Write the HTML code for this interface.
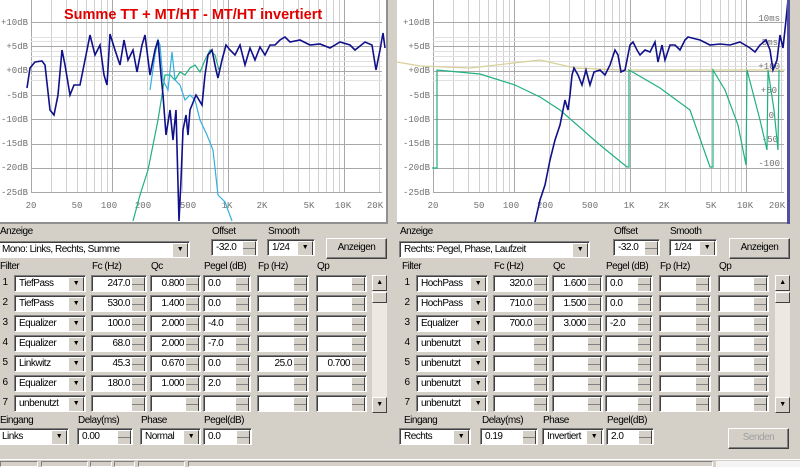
<!DOCTYPE html>
<html><head><meta charset="utf-8">
<style>
*{box-sizing:border-box;margin:0;padding:0}
body{width:800px;height:467px;overflow:hidden;background:#d4d0c8;font-family:"Liberation Sans",sans-serif;font-size:10px;letter-spacing:-0.5px;color:#000;position:relative}
.p{position:absolute;top:0;width:400px;height:467px}
.a{position:absolute;white-space:nowrap}
.lb{position:absolute;white-space:nowrap;font-size:10px}
.f{position:absolute;height:17px;background:#fff;border:1px solid;border-color:#808080 #fff #fff #808080;box-shadow:inset 1px 1px #404040;line-height:15px;padding:0 4px;white-space:nowrap;overflow:hidden}
.s{padding-right:16px;text-align:right}
.s.l{text-align:left}
.s::after{content:"";position:absolute;right:1px;top:1px;width:12px;height:13px;background:linear-gradient(#d4d0c8 0 6px,#808080 6px 7px,#d4d0c8 7px);border:1px solid;border-color:#fff #404040 #404040 #fff}
.d{padding-right:18px}
.d::after{content:"\25BC";font-size:7px;text-align:center;line-height:12px;position:absolute;right:1px;top:1px;width:14px;height:13px;background:#d4d0c8;border:1px solid;border-color:#fff #404040 #404040 #fff}
.btn{position:absolute;background:#d4d0c8;border:1px solid;border-color:#fff #404040 #404040 #fff;box-shadow:inset -1px -1px #808080;text-align:center;line-height:18px}
.sb{position:absolute;background:#ece9e2;width:15px}
.sb i{position:absolute;left:0;width:15px;height:16px;background:#d4d0c8;border:1px solid;border-color:#fff #404040 #404040 #fff;font-style:normal;font-size:7px;text-align:center;line-height:14px}
.n{position:absolute;width:10px;text-align:center}
svg text{font-family:"Liberation Mono",monospace;font-size:9px;fill:#707070;letter-spacing:0}
</style></head><body>

<div class="p" style="left:0">
<svg class="plot" style="position:absolute;left:-5px;top:0" width="393" height="224" viewBox="-5 0 393 224">
<rect x="-5" y="0" width="391" height="222" fill="#fff"/>
<rect x="-5" y="222" width="393" height="2" fill="#909090"/>
<rect x="386" y="0" width="2" height="224" fill="#909090"/>
<g class="grid"></g>
<text x="28" y="25" text-anchor="end">+10dB</text>
<text x="28" y="49" text-anchor="end">+5dB</text>
<text x="28" y="73" text-anchor="end">+0dB</text>
<text x="28" y="98" text-anchor="end">-5dB</text>
<text x="28" y="122" text-anchor="end">-10dB</text>
<text x="28" y="146" text-anchor="end">-15dB</text>
<text x="28" y="170" text-anchor="end">-20dB</text>
<text x="28" y="195" text-anchor="end">-25dB</text>
<g text-anchor="middle"><text x="31" y="208">20</text><text x="77" y="208">50</text><text x="109" y="208">100</text><text x="143" y="208">200</text><text x="188" y="208">500</text><text x="227" y="208">1K</text><text x="262" y="208">2K</text><text x="309" y="208">5K</text><text x="343" y="208">10K</text><text x="375" y="208">20K</text></g>
<polyline fill="none" stroke="#20b080" stroke-width="1.2" points="133,221 140,195 148,170 153,145 158,120 162,95 165,75 170,75 175,80 180,72 185,75 190,68 195,65 200,72 205,60 210,50 215,55 219,70"/>
<polyline fill="none" stroke="#30b0e0" stroke-width="1.2" points="150,90 155,55 158,40 160,45 163,80 168,90 172,52 175,80 180,85 185,100 190,95 195,100 200,120 207,135 213,150 218,195 225,202 232,221"/>
<polyline fill="none" stroke="#10108a" stroke-width="1.6" points="27,88 30,68 35,62 42,61 45,65 50,110 54,115 58,95 62,50 65,65 70,95 74,85 80,85 85,60 90,35 95,55 100,45 104,75 107,85 110,34 115,50 120,65 124,40 128,60 133,50 137,72 142,45 145,35 150,75 155,50 158,40 161,75 163,95 166,135 170,110 173,140 176,110 179,221 181,180 183,130 186,115 188,135 190,110 196,95 199,100 202,105 205,75 208,55 212,50 216,70 218,78 222,60 226,45 230,50 235,55 240,45 245,65 250,48 255,60 260,47 265,55 270,45 275,45 280,40 285,37 290,42 300,40 310,45 320,44 330,48 340,42 350,45 355,50 365,42 372,45 376,70 380,50 383,33 385,48"/>
<text x="64" y="19" style="font-family:'Liberation Sans',sans-serif;font-size:14.5px;font-weight:bold;fill:#e00000">Summe TT + MT/HT - MT/HT invertiert</text>
</svg>

<div class="lb" style="left:0;top:226px">Anzeige</div>
<div class="f d" style="left:-3px;top:241px;width:193px">Mono: Links, Rechts, Summe</div>
<div class="lb" style="left:212px;top:226px">Offset</div>
<div class="f s l" style="left:211px;top:239px;width:47px">-32.0</div>
<div class="lb" style="left:268px;top:226px">Smooth</div>
<div class="f d" style="left:267px;top:239px;width:48px">1/24</div>
<div class="btn" style="left:326px;top:238px;width:61px;height:21px">Anzeigen</div>

<div class="lb" style="left:0;top:261px">Filter</div>
<div class="lb" style="left:92px;top:261px">Fc (Hz)</div>
<div class="lb" style="left:151px;top:261px">Qc</div>
<div class="lb" style="left:204px;top:261px">Pegel (dB)</div>
<div class="lb" style="left:258px;top:261px">Fp (Hz)</div>
<div class="lb" style="left:317px;top:261px">Qp</div>

<div class="a" style="left:0;top:275px;width:390px;height:140px">
<div class="n" style="top:2px">1</div><div class="f d" style="left:14px;top:0;width:72px">TiefPass</div><div class="f s" style="left:91px;top:0;width:56px">247.0</div><div class="f s" style="left:150px;top:0;width:51px">0.800</div><div class="f s l" style="left:203px;top:0;width:48px">0.0</div><div class="f s" style="left:257px;top:0;width:52px"></div><div class="f s" style="left:316px;top:0;width:51px"></div>
<div class="n" style="top:22px">2</div><div class="f d" style="left:14px;top:20px;width:72px">TiefPass</div><div class="f s" style="left:91px;top:20px;width:56px">530.0</div><div class="f s" style="left:150px;top:20px;width:51px">1.400</div><div class="f s l" style="left:203px;top:20px;width:48px">0.0</div><div class="f s" style="left:257px;top:20px;width:52px"></div><div class="f s" style="left:316px;top:20px;width:51px"></div>
<div class="n" style="top:42px">3</div><div class="f d" style="left:14px;top:40px;width:72px">Equalizer</div><div class="f s" style="left:91px;top:40px;width:56px">100.0</div><div class="f s" style="left:150px;top:40px;width:51px">2.000</div><div class="f s l" style="left:203px;top:40px;width:48px">-4.0</div><div class="f s" style="left:257px;top:40px;width:52px"></div><div class="f s" style="left:316px;top:40px;width:51px"></div>
<div class="n" style="top:62px">4</div><div class="f d" style="left:14px;top:60px;width:72px">Equalizer</div><div class="f s" style="left:91px;top:60px;width:56px">68.0</div><div class="f s" style="left:150px;top:60px;width:51px">2.000</div><div class="f s l" style="left:203px;top:60px;width:48px">-7.0</div><div class="f s" style="left:257px;top:60px;width:52px"></div><div class="f s" style="left:316px;top:60px;width:51px"></div>
<div class="n" style="top:82px">5</div><div class="f d" style="left:14px;top:80px;width:72px">Linkwitz</div><div class="f s" style="left:91px;top:80px;width:56px">45.3</div><div class="f s" style="left:150px;top:80px;width:51px">0.670</div><div class="f s l" style="left:203px;top:80px;width:48px">0.0</div><div class="f s" style="left:257px;top:80px;width:52px">25.0</div><div class="f s" style="left:316px;top:80px;width:51px">0.700</div>
<div class="n" style="top:102px">6</div><div class="f d" style="left:14px;top:100px;width:72px">Equalizer</div><div class="f s" style="left:91px;top:100px;width:56px">180.0</div><div class="f s" style="left:150px;top:100px;width:51px">1.000</div><div class="f s l" style="left:203px;top:100px;width:48px">2.0</div><div class="f s" style="left:257px;top:100px;width:52px"></div><div class="f s" style="left:316px;top:100px;width:51px"></div>
<div class="n" style="top:122px">7</div><div class="f d" style="left:14px;top:120px;width:72px">unbenutzt</div><div class="f s" style="left:91px;top:120px;width:56px"></div><div class="f s" style="left:150px;top:120px;width:51px"></div><div class="f s l" style="left:203px;top:120px;width:48px"></div><div class="f s" style="left:257px;top:120px;width:52px"></div><div class="f s" style="left:316px;top:120px;width:51px"></div>
<div class="sb" style="left:372px;top:0;height:138px"><i style="top:0">&#9650;</i><i style="top:17px;height:11px"></i><i style="bottom:0">&#9660;</i></div>
</div>

<div class="lb" style="left:0;top:415px">Eingang</div>
<div class="f d" style="left:-3px;top:428px;width:72px">Links</div>
<div class="lb" style="left:78px;top:415px">Delay(ms)</div>
<div class="f s l" style="left:77px;top:428px;width:56px">0.00</div>
<div class="lb" style="left:141px;top:415px">Phase</div>
<div class="f d" style="left:140px;top:428px;width:61px">Normal</div>
<div class="lb" style="left:204px;top:415px">Pegel(dB)</div>
<div class="f s l" style="left:203px;top:428px;width:49px">0.0</div>
</div>

<div class="p" style="left:402px">
<svg class="plot" style="position:absolute;left:-5px;top:0" width="393" height="224" viewBox="-5 0 393 224">
<rect x="-5" y="0" width="391" height="222" fill="#fff"/>
<rect x="-5" y="222" width="393" height="2" fill="#909090"/>
<g class="grid"></g>
<text x="28" y="25" text-anchor="end">+10dB</text>
<text x="28" y="49" text-anchor="end">+5dB</text>
<text x="28" y="73" text-anchor="end">+0dB</text>
<text x="28" y="98" text-anchor="end">-5dB</text>
<text x="28" y="122" text-anchor="end">-10dB</text>
<text x="28" y="146" text-anchor="end">-15dB</text>
<text x="28" y="170" text-anchor="end">-20dB</text>
<text x="28" y="195" text-anchor="end">-25dB</text>
<g text-anchor="middle"><text x="31" y="208">20</text><text x="77" y="208">50</text><text x="109" y="208">100</text><text x="143" y="208">200</text><text x="188" y="208">500</text><text x="227" y="208">1K</text><text x="262" y="208">2K</text><text x="309" y="208">5K</text><text x="343" y="208">10K</text><text x="375" y="208">20K</text></g>
<g text-anchor="end"><text x="378" y="21">10ms</text><text x="376" y="45">5ms</text><text x="378" y="69">+100</text><text x="375" y="93">+50</text><text x="372" y="118">0</text><text x="376" y="142">-50</text><text x="378" y="166">-100</text></g>
<g transform="translate(-402,0)">
<polyline fill="none" stroke="#d8d098" stroke-width="1.2" points="397,62 420,66 470,68 540,60 575,68 620,70 785,70"/>
<polyline fill="none" stroke="#20b080" stroke-width="1.2" points="432,168 437,168 437,70 480,74 515,85 540,97 560,110 600,145 627,167 629,167 629,70 660,88 690,110 710,167 713,167 713,70 725,90 738,125 746,165 747,70 760,120 767,150 768,70 774,110 778,150 779,70"/>
<polyline fill="none" stroke="#10108a" stroke-width="1.6" points="535,222 540,200 545,185 550,160 555,140 560,125 565,100 568,110 570,95 572,75 574,68 578,75 582,85 586,70 590,85 594,72 600,70 605,75 610,65 615,50 618,55 621,72 625,70 630,45 633,42 637,50 640,55 645,50 650,52 655,42 658,62 662,45 665,60 670,45 675,45 680,50 685,40 688,37 692,38 700,40 710,45 720,44 730,45 740,42 750,48 755,52 760,45 766,40 770,50 773,70 777,60 780,35 783,48 786,20 788,0"/>
</g>
<rect x="385" y="0" width="3" height="224" fill="#5050a0"/>
</svg>

<div class="lb" style="left:-2px;top:226px">Anzeige</div>
<div class="f d" style="left:-3px;top:241px;width:191px">Rechts: Pegel, Phase, Laufzeit</div>
<div class="lb" style="left:212px;top:226px">Offset</div>
<div class="f s l" style="left:211px;top:239px;width:47px">-32.0</div>
<div class="lb" style="left:268px;top:226px">Smooth</div>
<div class="f d" style="left:267px;top:239px;width:48px">1/24</div>
<div class="btn" style="left:327px;top:238px;width:61px;height:21px">Anzeigen</div>

<div class="lb" style="left:0;top:261px">Filter</div>
<div class="lb" style="left:92px;top:261px">Fc (Hz)</div>
<div class="lb" style="left:151px;top:261px">Qc</div>
<div class="lb" style="left:204px;top:261px">Pegel (dB)</div>
<div class="lb" style="left:258px;top:261px">Fp (Hz)</div>
<div class="lb" style="left:317px;top:261px">Qp</div>

<div class="a" style="left:0;top:275px;width:390px;height:140px">
<div class="n" style="top:2px">1</div><div class="f d" style="left:14px;top:0;width:72px">HochPass</div><div class="f s" style="left:91px;top:0;width:56px">320.0</div><div class="f s" style="left:150px;top:0;width:51px">1.600</div><div class="f s l" style="left:203px;top:0;width:48px">0.0</div><div class="f s" style="left:257px;top:0;width:52px"></div><div class="f s" style="left:316px;top:0;width:51px"></div>
<div class="n" style="top:22px">2</div><div class="f d" style="left:14px;top:20px;width:72px">HochPass</div><div class="f s" style="left:91px;top:20px;width:56px">710.0</div><div class="f s" style="left:150px;top:20px;width:51px">1.500</div><div class="f s l" style="left:203px;top:20px;width:48px">0.0</div><div class="f s" style="left:257px;top:20px;width:52px"></div><div class="f s" style="left:316px;top:20px;width:51px"></div>
<div class="n" style="top:42px">3</div><div class="f d" style="left:14px;top:40px;width:72px">Equalizer</div><div class="f s" style="left:91px;top:40px;width:56px">700.0</div><div class="f s" style="left:150px;top:40px;width:51px">3.000</div><div class="f s l" style="left:203px;top:40px;width:48px">-2.0</div><div class="f s" style="left:257px;top:40px;width:52px"></div><div class="f s" style="left:316px;top:40px;width:51px"></div>
<div class="n" style="top:62px">4</div><div class="f d" style="left:14px;top:60px;width:72px">unbenutzt</div><div class="f s" style="left:91px;top:60px;width:56px"></div><div class="f s" style="left:150px;top:60px;width:51px"></div><div class="f s l" style="left:203px;top:60px;width:48px"></div><div class="f s" style="left:257px;top:60px;width:52px"></div><div class="f s" style="left:316px;top:60px;width:51px"></div>
<div class="n" style="top:82px">5</div><div class="f d" style="left:14px;top:80px;width:72px">unbenutzt</div><div class="f s" style="left:91px;top:80px;width:56px"></div><div class="f s" style="left:150px;top:80px;width:51px"></div><div class="f s l" style="left:203px;top:80px;width:48px"></div><div class="f s" style="left:257px;top:80px;width:52px"></div><div class="f s" style="left:316px;top:80px;width:51px"></div>
<div class="n" style="top:102px">6</div><div class="f d" style="left:14px;top:100px;width:72px">unbenutzt</div><div class="f s" style="left:91px;top:100px;width:56px"></div><div class="f s" style="left:150px;top:100px;width:51px"></div><div class="f s l" style="left:203px;top:100px;width:48px"></div><div class="f s" style="left:257px;top:100px;width:52px"></div><div class="f s" style="left:316px;top:100px;width:51px"></div>
<div class="n" style="top:122px">7</div><div class="f d" style="left:14px;top:120px;width:72px">unbenutzt</div><div class="f s" style="left:91px;top:120px;width:56px"></div><div class="f s" style="left:150px;top:120px;width:51px"></div><div class="f s l" style="left:203px;top:120px;width:48px"></div><div class="f s" style="left:257px;top:120px;width:52px"></div><div class="f s" style="left:316px;top:120px;width:51px"></div>
<div class="sb" style="left:373px;top:0;height:138px"><i style="top:0">&#9650;</i><i style="top:17px;height:11px"></i><i style="bottom:0">&#9660;</i></div>
</div>

<div class="lb" style="left:2px;top:415px">Eingang</div>
<div class="f d" style="left:-3px;top:428px;width:72px">Rechts</div>
<div class="lb" style="left:80px;top:415px">Delay(ms)</div>
<div class="f s l" style="left:78px;top:428px;width:58px">0.19</div>
<div class="lb" style="left:141px;top:415px">Phase</div>
<div class="f d" style="left:140px;top:428px;width:62px">Invertiert</div>
<div class="lb" style="left:205px;top:415px">Pegel(dB)</div>
<div class="f s l" style="left:204px;top:428px;width:48px">2.0</div>
<div class="btn" style="left:326px;top:428px;width:61px;height:21px;color:#a0a0a0">Senden</div>
</div>

<div class="a" style="left:0;top:459px;width:800px;height:1px;background:#fff"></div>
<div class="a" style="left:0;top:461px;width:800px;height:6px">
<div class="a" style="left:0;width:38px;height:6px;border:1px solid;border-color:#808080 #fff #fff #808080"></div>
<div class="a" style="left:41px;width:47px;height:6px;border:1px solid;border-color:#808080 #fff #fff #808080"></div>
<div class="a" style="left:90px;width:22px;height:6px;border:1px solid;border-color:#808080 #fff #fff #808080"></div>
<div class="a" style="left:114px;width:21px;height:6px;border:1px solid;border-color:#808080 #fff #fff #808080"></div>
<div class="a" style="left:138px;width:47px;height:6px;border:1px solid;border-color:#808080 #fff #fff #808080"></div>
<div class="a" style="left:188px;width:525px;height:6px;border:1px solid;border-color:#808080 #fff #fff #808080"></div>
<div class="a" style="left:716px;width:84px;height:6px;background:#f4f4f4"></div>
</div>

<script>
(function(){
var NS="http://www.w3.org/2000/svg";
function X(f){return 31+116*Math.log10(f/20);}
function Y(db){return 70.6-db*4.86;}
document.querySelectorAll('.grid').forEach(function(g){
 function ln(x1,y1,x2,y2,c){var l=document.createElementNS(NS,'line');l.setAttribute('x1',x1);l.setAttribute('y1',y1);l.setAttribute('x2',x2);l.setAttribute('y2',y2);l.setAttribute('stroke',c);l.setAttribute('stroke-width','1');g.appendChild(l);}
 var fs=[20,30,40,50,60,70,80,90,100,200,300,400,500,600,700,800,900,1000,2000,3000,4000,5000,6000,7000,8000,9000,10000,20000];
 fs.forEach(function(f){var x=Math.round(X(f))+0.5;var maj=(f==100||f==1000||f==10000||f==20);ln(x,0,x,193,maj?'#a8a8a8':'#d0d0d0');});
 [3,4,6,7,-1,-2,1,2].forEach(function(d){var y=Math.round(Y(d))+0.5;ln(31,y,382,y,'#e0e0e0');});
 for(var d=10;d>=-25;d-=5){var y=Math.round(Y(d))+0.5;ln(31,y,382,y,'#a8a8a8');}
});
})();
</script>
</body></html>
